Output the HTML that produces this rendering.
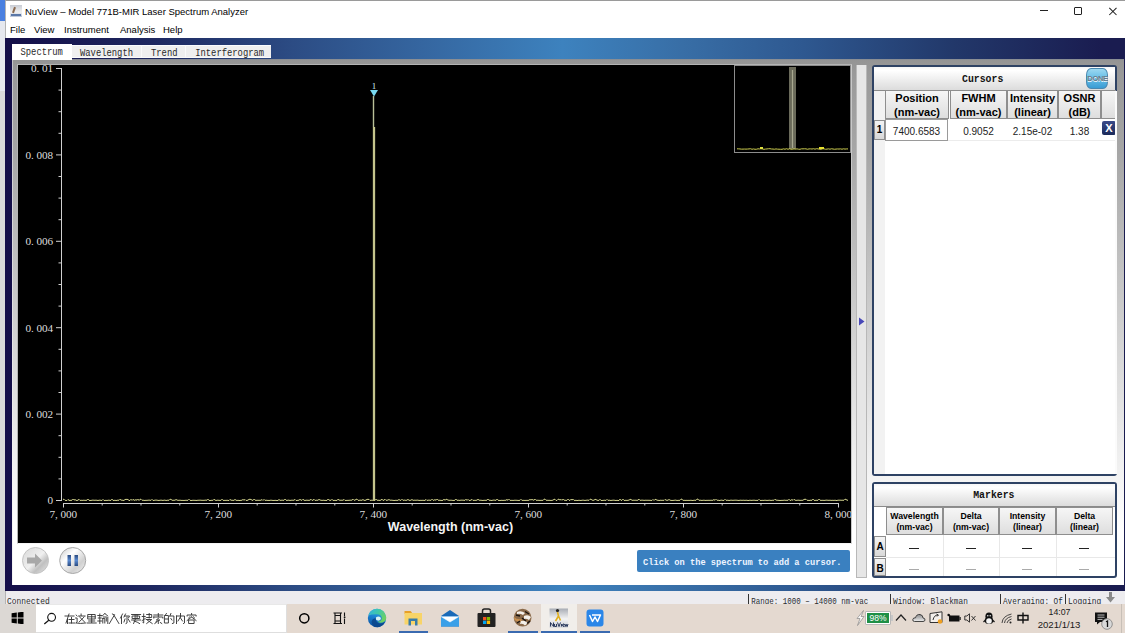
<!DOCTYPE html>
<html><head><meta charset="utf-8">
<style>
*{margin:0;padding:0;box-sizing:border-box}
html,body{width:1125px;height:633px;overflow:hidden;background:#d9d9d9;font-family:"Liberation Sans",sans-serif;position:relative}
.a{position:absolute;white-space:nowrap}
.mono{font-family:"Liberation Mono",monospace}
.sx{display:inline-block;transform-origin:0 0}
.tl{font-family:"Liberation Serif",serif;font-size:11.2px;fill:#dcdcdc}
.tm{font-family:"Liberation Mono",monospace;font-size:11.5px;fill:#e0e0e0}
.mi{font-size:9.5px;color:#000;top:24px;line-height:11px}
.hc{position:absolute;background:linear-gradient(#f6f6f6,#dedede);border:1px solid #8e8e8e;text-align:center;font-weight:bold;color:#000}
.rc{position:absolute;background:linear-gradient(#f4f4f4,#d8d8d8);border:1px solid #8e8e8e;text-align:center;font-weight:bold;color:#000}
.dc{position:absolute;text-align:center;color:#222;font-size:10px}
</style></head><body>
<!-- desktop strip -->
<div class="a" style="left:0;top:0;width:5px;height:21px;background:#4a80e0"></div>
<div class="a" style="left:0;top:21px;width:5px;height:70px;background:#e6e8ee"></div>
<div class="a" style="left:0;top:91px;width:5px;height:513px;background:#d9d9d9"></div>

<!-- window -->
<div class="a" style="left:5px;top:0;width:1120px;height:604px;background:#fff;border-left:1px solid #b4b4b4;border-top:1px solid #9a9a9a"></div>
<!-- app icon -->
<div class="a" style="left:10px;top:5px;width:12px;height:12px;background:linear-gradient(#c8ccd4,#f0f0f0 60%,#b8c4d8)"></div>
<div class="a" style="left:13px;top:7px;width:2px;height:6px;background:#8a6a50;transform:rotate(20deg)"></div>
<div class="a" style="left:11px;top:14px;width:10px;height:2px;background:#5a78a8"></div>
<!-- title -->
<div class="a" style="left:25px;top:5.5px;font-size:9.5px;line-height:11px;color:#000">NuView – Model 771B-MIR Laser Spectrum Analyzer</div>
<!-- window controls -->
<div class="a" style="left:1040px;top:10px;width:8px;height:1px;background:#222"></div>
<div class="a" style="left:1074px;top:7px;width:8px;height:8px;border:1px solid #222;border-radius:1px"></div>
<svg class="a" style="left:1108px;top:7px" width="10" height="9" viewBox="0 0 10 9"><path d="M1.3 0.8 L8.5 8 M8.5 0.8 L1.3 8" stroke="#222" stroke-width="1.05"/></svg>
<!-- menu -->
<div class="a mi" style="left:10px">File</div>
<div class="a mi" style="left:34px">View</div>
<div class="a mi" style="left:64px">Instrument</div>
<div class="a mi" style="left:120px">Analysis</div>
<div class="a mi" style="left:163px">Help</div>

<!-- app frame navy gradient -->
<div class="a" style="left:5px;top:38px;width:1120px;height:553px;background:linear-gradient(90deg,#140e48 0%,#1e2860 13.2%,#2c4c84 25.7%,#3566a0 37.3%,#3d82be 49.8%,#386ea6 60.5%,#2e5890 71.3%,#22386a 84.6%,#1a1c50 98%)"></div>
<!-- inner content -->
<div class="a" style="left:12px;top:59px;width:1112px;height:526px;background:linear-gradient(180deg,#949494 0%,#9a9a9a 3%,#a6a6a6 17.8%,#cacaca 45.9%,#eeeeee 74.4%,#ffffff 89.6%)"></div>
<div class="a" style="left:12px;top:59px;width:1112px;height:1px;background:#8a8e94"></div>
<div class="a" style="left:12px;top:59px;width:1px;height:526px;background:linear-gradient(#c4c4c8,#f4f4f4 80%)"></div>

<!-- tabs -->
<div class="a" style="left:12px;top:44px;width:60px;height:16px;background:#fff"></div>
<div class="a" style="left:72px;top:45px;width:199px;height:13px;background:#efefef;border-top:1px solid #fafcff;border-bottom:1px solid #fafafa"></div>
<div class="a" style="left:141px;top:45px;width:1px;height:13px;background:#fafafa"></div>
<div class="a" style="left:185px;top:45px;width:1px;height:13px;background:#fafafa"></div>

<!-- plot -->
<div class="a" style="left:17px;top:64px;width:835px;height:480px;border:1px solid #b4b4b4;border-right-color:#c8c8c8;border-bottom-color:#f4f4f4;background:#000"></div>
<svg class="a" style="left:0;top:0" width="1125" height="633" viewBox="0 0 1125 633">
<defs><clipPath id="pc"><rect x="18" y="65" width="833" height="478"/></clipPath></defs>
<g clip-path="url(#pc)">
<line x1="61.5" y1="68" x2="61.5" y2="501" stroke="#d0d0d0" stroke-width="1"/>
<line x1="56" y1="68.5" x2="62" y2="68.5" stroke="#d0d0d0" stroke-width="1"/>
<line x1="58.5" y1="90.1" x2="62" y2="90.1" stroke="#d0d0d0" stroke-width="1"/>
<line x1="58.5" y1="111.7" x2="62" y2="111.7" stroke="#d0d0d0" stroke-width="1"/>
<line x1="58.5" y1="133.3" x2="62" y2="133.3" stroke="#d0d0d0" stroke-width="1"/>
<text x="31.00 36.50 42.00 47.50" y="72.4" class="tl">0.01</text>
<line x1="56" y1="154.9" x2="62" y2="154.9" stroke="#d0d0d0" stroke-width="1"/>
<line x1="58.5" y1="176.5" x2="62" y2="176.5" stroke="#d0d0d0" stroke-width="1"/>
<line x1="58.5" y1="198.1" x2="62" y2="198.1" stroke="#d0d0d0" stroke-width="1"/>
<line x1="58.5" y1="219.7" x2="62" y2="219.7" stroke="#d0d0d0" stroke-width="1"/>
<text x="25.50 31.00 36.50 42.00 47.50" y="158.8" class="tl">0.008</text>
<line x1="56" y1="241.3" x2="62" y2="241.3" stroke="#d0d0d0" stroke-width="1"/>
<line x1="58.5" y1="262.9" x2="62" y2="262.9" stroke="#d0d0d0" stroke-width="1"/>
<line x1="58.5" y1="284.5" x2="62" y2="284.5" stroke="#d0d0d0" stroke-width="1"/>
<line x1="58.5" y1="306.1" x2="62" y2="306.1" stroke="#d0d0d0" stroke-width="1"/>
<text x="25.50 31.00 36.50 42.00 47.50" y="245.2" class="tl">0.006</text>
<line x1="56" y1="327.7" x2="62" y2="327.7" stroke="#d0d0d0" stroke-width="1"/>
<line x1="58.5" y1="349.3" x2="62" y2="349.3" stroke="#d0d0d0" stroke-width="1"/>
<line x1="58.5" y1="370.9" x2="62" y2="370.9" stroke="#d0d0d0" stroke-width="1"/>
<line x1="58.5" y1="392.5" x2="62" y2="392.5" stroke="#d0d0d0" stroke-width="1"/>
<text x="25.50 31.00 36.50 42.00 47.50" y="331.6" class="tl">0.004</text>
<line x1="56" y1="414.1" x2="62" y2="414.1" stroke="#d0d0d0" stroke-width="1"/>
<line x1="58.5" y1="435.7" x2="62" y2="435.7" stroke="#d0d0d0" stroke-width="1"/>
<line x1="58.5" y1="457.3" x2="62" y2="457.3" stroke="#d0d0d0" stroke-width="1"/>
<line x1="58.5" y1="478.9" x2="62" y2="478.9" stroke="#d0d0d0" stroke-width="1"/>
<text x="25.50 31.00 36.50 42.00 47.50" y="418.0" class="tl">0.002</text>
<line x1="56" y1="500.5" x2="62" y2="500.5" stroke="#d0d0d0" stroke-width="1"/>
<text x="47.50" y="504.4" class="tl">0</text>
<line x1="63" y1="503.5" x2="839" y2="503.5" stroke="#d0d0d0" stroke-width="1"/>
<line x1="63.5" y1="503" x2="63.5" y2="507.5" stroke="#d0d0d0" stroke-width="1"/>
<line x1="102.2" y1="503" x2="102.2" y2="505.5" stroke="#d0d0d0" stroke-width="1"/>
<line x1="141.0" y1="503" x2="141.0" y2="505.5" stroke="#d0d0d0" stroke-width="1"/>
<line x1="179.8" y1="503" x2="179.8" y2="505.5" stroke="#d0d0d0" stroke-width="1"/>
<text x="49.60 55.10 60.60 66.10 71.60" y="518" class="tl">7,000</text>
<line x1="218.5" y1="503" x2="218.5" y2="507.5" stroke="#d0d0d0" stroke-width="1"/>
<line x1="257.2" y1="503" x2="257.2" y2="505.5" stroke="#d0d0d0" stroke-width="1"/>
<line x1="296.0" y1="503" x2="296.0" y2="505.5" stroke="#d0d0d0" stroke-width="1"/>
<line x1="334.8" y1="503" x2="334.8" y2="505.5" stroke="#d0d0d0" stroke-width="1"/>
<text x="204.60 210.10 215.60 221.10 226.60" y="518" class="tl">7,200</text>
<line x1="373.5" y1="503" x2="373.5" y2="507.5" stroke="#d0d0d0" stroke-width="1"/>
<line x1="412.2" y1="503" x2="412.2" y2="505.5" stroke="#d0d0d0" stroke-width="1"/>
<line x1="451.0" y1="503" x2="451.0" y2="505.5" stroke="#d0d0d0" stroke-width="1"/>
<line x1="489.8" y1="503" x2="489.8" y2="505.5" stroke="#d0d0d0" stroke-width="1"/>
<text x="359.60 365.10 370.60 376.10 381.60" y="518" class="tl">7,400</text>
<line x1="528.5" y1="503" x2="528.5" y2="507.5" stroke="#d0d0d0" stroke-width="1"/>
<line x1="567.2" y1="503" x2="567.2" y2="505.5" stroke="#d0d0d0" stroke-width="1"/>
<line x1="606.0" y1="503" x2="606.0" y2="505.5" stroke="#d0d0d0" stroke-width="1"/>
<line x1="644.8" y1="503" x2="644.8" y2="505.5" stroke="#d0d0d0" stroke-width="1"/>
<text x="514.60 520.10 525.60 531.10 536.60" y="518" class="tl">7,600</text>
<line x1="683.5" y1="503" x2="683.5" y2="507.5" stroke="#d0d0d0" stroke-width="1"/>
<line x1="722.2" y1="503" x2="722.2" y2="505.5" stroke="#d0d0d0" stroke-width="1"/>
<line x1="761.0" y1="503" x2="761.0" y2="505.5" stroke="#d0d0d0" stroke-width="1"/>
<line x1="799.8" y1="503" x2="799.8" y2="505.5" stroke="#d0d0d0" stroke-width="1"/>
<text x="669.60 675.10 680.60 686.10 691.60" y="518" class="tl">7,800</text>
<line x1="838.5" y1="503" x2="838.5" y2="507.5" stroke="#d0d0d0" stroke-width="1"/>
<text x="824.60 830.10 835.60 841.10 846.60" y="518" class="tl">8,000</text>
<polyline points="63.0,499.37 64.0,499.24 65.0,500.29 66.0,500.48 67.0,500.49 68.0,499.47 69.0,500.33 70.0,500.45 71.0,500.25 72.0,500.27 73.0,499.11 74.0,500.16 75.0,499.44 76.0,500.38 77.0,500.43 78.0,500.24 79.0,499.28 80.0,500.48 81.0,500.23 82.0,500.37 83.0,500.32 84.0,500.18 85.0,500.40 86.0,500.29 87.0,500.21 88.0,499.11 89.0,500.33 90.0,500.44 91.0,500.48 92.0,500.19 93.0,500.15 94.0,500.22 95.0,500.27 96.0,500.16 97.0,500.31 98.0,500.48 99.0,500.24 100.0,500.17 101.0,500.35 102.0,500.49 103.0,499.43 104.0,500.48 105.0,500.45 106.0,500.34 107.0,500.47 108.0,500.28 109.0,500.17 110.0,500.39 111.0,500.36 112.0,499.12 113.0,500.43 114.0,500.41 115.0,500.26 116.0,500.50 117.0,500.35 118.0,500.12 119.0,500.29 120.0,499.23 121.0,500.14 122.0,500.15 123.0,500.34 124.0,500.46 125.0,499.48 126.0,499.42 127.0,499.36 128.0,499.50 129.0,500.46 130.0,500.49 131.0,499.25 132.0,500.40 133.0,499.35 134.0,500.16 135.0,500.31 136.0,499.47 137.0,500.36 138.0,499.17 139.0,500.49 140.0,499.29 141.0,499.28 142.0,500.29 143.0,500.15 144.0,500.40 145.0,500.43 146.0,500.29 147.0,500.37 148.0,500.18 149.0,500.16 150.0,500.17 151.0,500.41 152.0,499.36 153.0,500.49 154.0,500.40 155.0,500.12 156.0,500.13 157.0,500.12 158.0,500.41 159.0,500.42 160.0,500.25 161.0,500.16 162.0,500.24 163.0,500.47 164.0,500.14 165.0,500.20 166.0,500.43 167.0,500.37 168.0,500.11 169.0,500.34 170.0,499.21 171.0,499.45 172.0,500.14 173.0,500.44 174.0,500.11 175.0,500.36 176.0,499.45 177.0,500.11 178.0,500.29 179.0,500.33 180.0,500.17 181.0,500.40 182.0,500.40 183.0,500.40 184.0,500.45 185.0,500.36 186.0,500.27 187.0,500.33 188.0,500.30 189.0,499.29 190.0,500.32 191.0,500.50 192.0,500.43 193.0,500.21 194.0,500.37 195.0,500.28 196.0,500.46 197.0,500.40 198.0,500.19 199.0,500.28 200.0,500.14 201.0,500.25 202.0,500.30 203.0,500.32 204.0,500.31 205.0,500.22 206.0,500.12 207.0,500.28 208.0,499.16 209.0,500.45 210.0,500.47 211.0,500.47 212.0,500.19 213.0,500.44 214.0,499.24 215.0,500.15 216.0,500.41 217.0,500.34 218.0,500.10 219.0,500.44 220.0,500.29 221.0,500.42 222.0,499.21 223.0,500.28 224.0,500.49 225.0,500.25 226.0,500.47 227.0,500.18 228.0,500.46 229.0,500.48 230.0,499.39 231.0,500.33 232.0,500.17 233.0,500.44 234.0,500.27 235.0,499.46 236.0,500.22 237.0,500.47 238.0,500.25 239.0,500.47 240.0,500.47 241.0,500.32 242.0,500.28 243.0,499.39 244.0,500.29 245.0,499.46 246.0,500.48 247.0,500.38 248.0,500.20 249.0,499.30 250.0,499.36 251.0,499.40 252.0,500.21 253.0,500.42 254.0,499.13 255.0,500.17 256.0,500.30 257.0,500.34 258.0,500.22 259.0,500.36 260.0,500.22 261.0,500.34 262.0,499.48 263.0,500.47 264.0,499.40 265.0,500.47 266.0,500.15 267.0,500.39 268.0,500.38 269.0,500.44 270.0,500.39 271.0,500.11 272.0,500.40 273.0,500.38 274.0,500.50 275.0,500.31 276.0,500.42 277.0,500.50 278.0,500.46 279.0,499.48 280.0,500.38 281.0,500.27 282.0,500.20 283.0,500.21 284.0,500.34 285.0,499.11 286.0,500.21 287.0,500.48 288.0,500.14 289.0,500.21 290.0,500.44 291.0,500.30 292.0,500.18 293.0,500.27 294.0,500.23 295.0,499.41 296.0,500.45 297.0,500.46 298.0,500.28 299.0,500.25 300.0,499.30 301.0,500.18 302.0,500.30 303.0,499.24 304.0,500.21 305.0,500.47 306.0,500.21 307.0,500.20 308.0,500.30 309.0,500.31 310.0,500.19 311.0,499.24 312.0,500.44 313.0,500.20 314.0,499.27 315.0,500.48 316.0,500.23 317.0,500.23 318.0,500.29 319.0,499.31 320.0,500.14 321.0,500.11 322.0,500.49 323.0,500.17 324.0,500.32 325.0,500.42 326.0,500.42 327.0,500.44 328.0,499.12 329.0,500.17 330.0,500.15 331.0,500.41 332.0,499.31 333.0,500.50 334.0,500.32 335.0,500.44 336.0,500.37 337.0,500.50 338.0,499.16 339.0,500.13 340.0,500.14 341.0,500.35 342.0,500.10 343.0,500.36 344.0,499.39 345.0,500.46 346.0,500.39 347.0,500.40 348.0,500.30 349.0,500.35 350.0,500.15 351.0,500.25 352.0,500.12 353.0,499.21 354.0,500.21 355.0,500.20 356.0,499.39 357.0,499.13 358.0,500.31 359.0,500.38 360.0,500.11 361.0,500.24 362.0,500.28 363.0,499.43 364.0,500.42 365.0,500.30 366.0,500.14 367.0,499.32 368.0,499.42 369.0,499.36 370.0,500.40 371.0,500.27 372.0,500.20 373.0,500.33 374.0,500.35 375.0,500.48 376.0,499.11 377.0,500.30 378.0,500.15 379.0,500.39 380.0,500.34 381.0,500.12 382.0,499.15 383.0,500.49 384.0,500.14 385.0,499.27 386.0,500.34 387.0,500.17 388.0,500.11 389.0,499.46 390.0,500.29 391.0,500.12 392.0,500.24 393.0,500.32 394.0,500.48 395.0,500.41 396.0,500.24 397.0,500.45 398.0,500.25 399.0,499.46 400.0,500.29 401.0,500.34 402.0,499.26 403.0,500.38 404.0,500.12 405.0,500.15 406.0,500.41 407.0,500.12 408.0,499.38 409.0,500.30 410.0,500.33 411.0,500.23 412.0,499.41 413.0,500.36 414.0,500.23 415.0,500.18 416.0,500.30 417.0,500.11 418.0,500.17 419.0,500.41 420.0,500.38 421.0,500.30 422.0,500.41 423.0,500.23 424.0,500.44 425.0,500.41 426.0,499.44 427.0,500.48 428.0,500.14 429.0,500.21 430.0,500.13 431.0,500.43 432.0,499.20 433.0,500.23 434.0,500.35 435.0,499.43 436.0,500.39 437.0,499.12 438.0,500.11 439.0,500.36 440.0,500.17 441.0,500.48 442.0,500.35 443.0,500.42 444.0,499.14 445.0,500.34 446.0,499.19 447.0,499.49 448.0,500.13 449.0,500.20 450.0,500.36 451.0,500.12 452.0,500.40 453.0,500.37 454.0,500.50 455.0,500.13 456.0,499.12 457.0,500.41 458.0,500.12 459.0,500.35 460.0,500.33 461.0,500.13 462.0,500.18 463.0,500.17 464.0,500.26 465.0,500.37 466.0,499.19 467.0,500.42 468.0,499.40 469.0,500.49 470.0,500.37 471.0,500.15 472.0,499.39 473.0,500.46 474.0,500.22 475.0,500.41 476.0,500.25 477.0,500.20 478.0,499.23 479.0,500.16 480.0,500.27 481.0,500.20 482.0,500.40 483.0,500.44 484.0,500.27 485.0,500.34 486.0,500.30 487.0,500.18 488.0,499.10 489.0,500.31 490.0,500.16 491.0,500.48 492.0,500.45 493.0,500.11 494.0,500.13 495.0,500.15 496.0,500.40 497.0,499.12 498.0,500.26 499.0,500.41 500.0,500.44 501.0,500.40 502.0,500.24 503.0,500.50 504.0,500.23 505.0,500.38 506.0,500.18 507.0,499.47 508.0,500.34 509.0,499.24 510.0,500.43 511.0,500.34 512.0,500.38 513.0,500.38 514.0,500.36 515.0,500.15 516.0,500.35 517.0,500.21 518.0,500.50 519.0,500.33 520.0,500.34 521.0,499.32 522.0,500.49 523.0,500.24 524.0,500.46 525.0,500.35 526.0,500.44 527.0,500.29 528.0,500.46 529.0,500.18 530.0,499.42 531.0,500.12 532.0,499.31 533.0,500.13 534.0,500.14 535.0,499.17 536.0,500.19 537.0,500.34 538.0,500.17 539.0,500.41 540.0,500.29 541.0,500.45 542.0,500.21 543.0,500.48 544.0,499.20 545.0,499.16 546.0,500.26 547.0,500.25 548.0,500.33 549.0,500.33 550.0,500.32 551.0,500.49 552.0,500.30 553.0,500.19 554.0,499.32 555.0,499.31 556.0,500.45 557.0,500.46 558.0,499.30 559.0,499.25 560.0,500.21 561.0,499.30 562.0,500.30 563.0,499.12 564.0,500.16 565.0,500.21 566.0,500.42 567.0,500.30 568.0,499.13 569.0,500.18 570.0,500.47 571.0,499.20 572.0,500.14 573.0,499.17 574.0,500.30 575.0,500.42 576.0,500.30 577.0,500.49 578.0,500.44 579.0,500.23 580.0,500.43 581.0,500.45 582.0,500.25 583.0,500.15 584.0,500.27 585.0,500.46 586.0,500.25 587.0,500.18 588.0,500.10 589.0,500.36 590.0,499.32 591.0,499.20 592.0,500.17 593.0,500.24 594.0,500.27 595.0,499.37 596.0,499.49 597.0,500.25 598.0,500.29 599.0,500.45 600.0,499.24 601.0,500.50 602.0,500.46 603.0,500.41 604.0,500.26 605.0,500.25 606.0,500.45 607.0,499.40 608.0,500.46 609.0,500.15 610.0,500.34 611.0,500.50 612.0,500.28 613.0,500.24 614.0,500.13 615.0,500.40 616.0,500.48 617.0,500.34 618.0,500.48 619.0,500.50 620.0,499.12 621.0,500.42 622.0,500.30 623.0,499.17 624.0,500.38 625.0,500.48 626.0,500.19 627.0,500.50 628.0,500.20 629.0,500.20 630.0,499.41 631.0,499.41 632.0,500.37 633.0,500.22 634.0,500.22 635.0,500.28 636.0,500.18 637.0,500.39 638.0,500.11 639.0,499.15 640.0,500.40 641.0,500.20 642.0,500.20 643.0,500.15 644.0,500.40 645.0,500.25 646.0,500.23 647.0,500.31 648.0,500.22 649.0,500.33 650.0,500.27 651.0,500.42 652.0,500.47 653.0,499.44 654.0,500.46 655.0,499.36 656.0,499.49 657.0,500.22 658.0,500.22 659.0,500.47 660.0,500.35 661.0,500.17 662.0,500.47 663.0,500.13 664.0,500.46 665.0,499.46 666.0,500.16 667.0,500.25 668.0,500.25 669.0,499.46 670.0,500.20 671.0,500.37 672.0,500.49 673.0,500.39 674.0,500.35 675.0,500.11 676.0,500.16 677.0,500.49 678.0,500.33 679.0,500.36 680.0,500.28 681.0,499.16 682.0,499.17 683.0,500.50 684.0,500.20 685.0,500.50 686.0,500.30 687.0,500.43 688.0,500.36 689.0,500.40 690.0,500.39 691.0,500.22 692.0,500.46 693.0,500.47 694.0,500.22 695.0,500.25 696.0,500.34 697.0,499.14 698.0,499.14 699.0,500.42 700.0,500.14 701.0,500.35 702.0,500.41 703.0,500.29 704.0,500.20 705.0,500.36 706.0,500.44 707.0,500.24 708.0,500.43 709.0,500.19 710.0,500.45 711.0,500.15 712.0,500.42 713.0,500.22 714.0,499.44 715.0,500.40 716.0,499.29 717.0,500.37 718.0,500.11 719.0,500.46 720.0,500.46 721.0,500.11 722.0,500.21 723.0,500.42 724.0,500.46 725.0,499.34 726.0,500.34 727.0,500.22 728.0,500.25 729.0,500.44 730.0,500.34 731.0,500.14 732.0,500.27 733.0,500.33 734.0,500.21 735.0,500.19 736.0,500.16 737.0,500.24 738.0,500.37 739.0,500.46 740.0,500.19 741.0,500.25 742.0,500.33 743.0,500.25 744.0,500.23 745.0,500.43 746.0,500.19 747.0,500.30 748.0,500.48 749.0,500.44 750.0,500.12 751.0,500.46 752.0,500.28 753.0,500.30 754.0,500.17 755.0,500.34 756.0,500.42 757.0,500.34 758.0,500.45 759.0,499.36 760.0,500.39 761.0,500.49 762.0,500.33 763.0,500.36 764.0,500.41 765.0,500.12 766.0,500.41 767.0,500.34 768.0,500.45 769.0,500.18 770.0,500.31 771.0,500.41 772.0,500.36 773.0,500.17 774.0,500.31 775.0,499.28 776.0,500.17 777.0,500.16 778.0,500.35 779.0,500.33 780.0,500.50 781.0,500.39 782.0,500.38 783.0,500.33 784.0,500.24 785.0,500.13 786.0,500.48 787.0,500.14 788.0,500.44 789.0,499.25 790.0,500.50 791.0,500.24 792.0,499.46 793.0,500.41 794.0,499.36 795.0,500.14 796.0,500.43 797.0,500.26 798.0,500.23 799.0,500.18 800.0,500.42 801.0,500.29 802.0,500.32 803.0,500.28 804.0,499.41 805.0,499.30 806.0,499.31 807.0,500.30 808.0,500.28 809.0,500.50 810.0,500.31 811.0,500.23 812.0,500.35 813.0,499.12 814.0,500.25 815.0,500.49 816.0,500.23 817.0,500.37 818.0,500.30 819.0,499.14 820.0,500.21 821.0,500.36 822.0,500.35 823.0,500.29 824.0,500.42 825.0,500.33 826.0,500.17 827.0,500.17 828.0,500.30 829.0,500.30 830.0,500.24 831.0,500.37 832.0,500.38 833.0,500.25 834.0,500.48 835.0,500.15 836.0,500.48 837.0,500.50 838.0,500.13 839.0,500.24 840.0,500.14 841.0,500.25 842.0,500.22 843.0,500.23 844.0,500.23 845.0,499.19 846.0,499.43 847.0,500.19 848.0,500.24" fill="none" stroke="#d8d890" stroke-width="1"/>
<line x1="373.5" y1="96" x2="373.5" y2="127" stroke="#b8bf98" stroke-width="1.4"/>
<line x1="374" y1="127" x2="374" y2="500" stroke="#c4c48c" stroke-width="2.3"/>
<polygon points="370,90 378,90 374,96.5" fill="#78d8f0"/>
<text x="374" y="89" text-anchor="middle" class="tl" style="font-size:9px;fill:#c8e8f0">1</text>
<text x="450.5" y="531" text-anchor="middle" style="font:bold 12.5px 'Liberation Sans',sans-serif;fill:#f4f4f4">Wavelength (nm-vac)</text>
<rect x="734.5" y="65.5" width="116" height="87" fill="#000" stroke="#8c8c8c" stroke-width="1"/>
<rect x="789" y="67" width="7" height="82" fill="#6a6a5a"/>
<line x1="792.5" y1="70" x2="792.5" y2="148" stroke="#a8a890" stroke-width="1.2"/>
<polyline points="737.0,148.81 738.5,148.83 740.0,148.96 741.5,149.15 743.0,149.12 744.5,149.05 746.0,149.11 747.5,149.04 749.0,148.91 750.5,148.74 752.0,149.27 753.5,148.96 755.0,149.28 756.5,149.23 758.0,148.81 759.5,148.95 761.0,148.75 762.5,149.03 764.0,149.29 765.5,149.07 767.0,148.94 768.5,148.74 770.0,148.71 771.5,149.01 773.0,149.05 774.5,149.24 776.0,148.91 777.5,149.17 779.0,149.21 780.5,149.29 782.0,149.30 783.5,148.89 785.0,149.23 786.5,148.72 788.0,149.25 789.5,148.78 791.0,149.22 792.5,149.29 794.0,148.87 795.5,149.15 797.0,148.86 798.5,149.19 800.0,149.27 801.5,148.84 803.0,148.87 804.5,148.79 806.0,148.86 807.5,149.25 809.0,148.92 810.5,148.87 812.0,149.02 813.5,148.74 815.0,149.15 816.5,148.72 818.0,148.87 819.5,149.29 821.0,149.29 822.5,148.91 824.0,148.81 825.5,149.25 827.0,149.11 828.5,148.86 830.0,149.20 831.5,148.78 833.0,149.01 834.5,149.26 836.0,149.08 837.5,148.96 839.0,149.04 840.5,148.89 842.0,149.21 843.5,148.82 845.0,149.08 846.5,148.91 848.0,148.92" fill="none" stroke="#e4e458" stroke-width="0.9"/>
<rect x="760" y="147" width="3" height="2" fill="#e0e040"/>
<rect x="819" y="147" width="5" height="2" fill="#e8e030"/>

</g>
</svg>

<!-- buttons under plot -->
<svg class="a" style="left:20px;top:545px" width="70" height="32" viewBox="0 0 70 32">
<defs>
<linearGradient id="g1" x1="0" y1="0" x2="1" y2="1"><stop offset="0" stop-color="#d8d8d8"/><stop offset="0.5" stop-color="#f0f0f0"/><stop offset="0.7" stop-color="#c0c0c0"/><stop offset="1" stop-color="#e8e8e8"/></linearGradient>
<linearGradient id="g2" x1="0" y1="0" x2="1" y2="1"><stop offset="0" stop-color="#c8c8c8"/><stop offset="0.35" stop-color="#ffffff"/><stop offset="0.7" stop-color="#d0d0d0"/><stop offset="1" stop-color="#f4f4f4"/></linearGradient>
<linearGradient id="g3" x1="0" y1="0" x2="0" y2="1"><stop offset="0" stop-color="#2a4a80"/><stop offset="0.5" stop-color="#5a8ad0"/><stop offset="1" stop-color="#2a4a80"/></linearGradient>
</defs>
<circle cx="15.5" cy="15.5" r="13" fill="url(#g1)" stroke="#c4c4c4" stroke-width="1"/>
<path d="M7 12.5 H15 V8.5 L22 15.5 L15 22.5 V18.5 H7 Z" fill="#a8a8a8"/>
<circle cx="52.7" cy="15.5" r="13" fill="url(#g2)" stroke="#a8a8a8" stroke-width="1"/>
<rect x="47.5" y="10" width="3.5" height="11" fill="url(#g3)"/>
<rect x="54.5" y="10" width="3.5" height="11" fill="url(#g3)"/>
</svg>

<!-- message -->
<div class="a" style="left:637px;top:550px;width:213px;height:22px;background:#3a80c0;border-radius:2px"></div>

<!-- scroll strip -->
<div class="a" style="left:856px;top:65px;width:11px;height:513px;background:#e6e6e6;border:1px solid #b8b8b8;border-top:none"></div>
<svg class="a" style="left:858px;top:317px" width="8" height="9" viewBox="0 0 8 9"><path d="M1 0.5 L6.5 4.5 L1 8.5 Z" fill="#4848b8"/></svg>

<!-- right panel: cursors -->
<div class="a" style="left:872px;top:65px;width:245px;height:411px;background:#fff;border:2px solid #2e4264;border-radius:3px"></div>
<div class="a" style="left:874px;top:67px;width:241px;height:24px;background:linear-gradient(#f6f6f6,#ffffff 15%,#ececec 60%,#dcdcdc);border-bottom:1px solid #8a8a8a"></div>
<div class="a" style="left:1086px;top:68px;width:22px;height:21px;border-radius:5px/7px;background:linear-gradient(#9cd8f0,#6ac0e8 45%,#3a9cd4);border:1px solid #4a88b0"></div>
<div class="a" style="left:1086px;top:75px;width:23px;text-align:center;font-size:7.5px;line-height:8px;font-weight:bold;color:#6a7a88;letter-spacing:-0.3px;text-shadow:0 1px 0 #e8f4fa">DONE</div>
<div class="a" style="left:874px;top:91px;width:241px;height:383px;background:linear-gradient(90deg,#f2f2f2 0,#f2f2f2 11px,#fff 11px)"></div>
<div class="hc" style="left:885px;top:90px;width:64px;height:29px;font-size:11px;line-height:14px;padding-top:0">Position<br>(nm-vac)</div>
<div class="hc" style="left:950px;top:90px;width:57px;height:29px;font-size:11px;line-height:14px;padding-top:0">FWHM<br>(nm-vac)</div>
<div class="hc" style="left:1007px;top:90px;width:51px;height:29px;font-size:11px;line-height:14px;padding-top:0">Intensity<br>(linear)</div>
<div class="hc" style="left:1058px;top:90px;width:43px;height:29px;font-size:11px;line-height:14px;padding-top:0">OSNR<br>(dB)</div>
<div class="hc" style="left:1101px;top:90px;width:15px;height:29px"></div>
<div class="rc" style="left:874px;top:120px;width:11px;height:20px;font-size:10px;line-height:18px">1</div>
<div class="a" style="left:885px;top:119px;width:63px;height:22px;border:1px solid #9a9a9a;background:#fff"></div>
<div class="a" style="left:948px;top:140px;width:167px;height:1px;background:#ececec"></div>
<div class="dc" style="left:885px;top:126px;width:63px;line-height:12px">7400.6583</div>
<div class="dc" style="left:950px;top:126px;width:57px;line-height:12px">0.9052</div>
<div class="dc" style="left:1007px;top:126px;width:51px;line-height:12px">2.15e-02</div>
<div class="dc" style="left:1058px;top:126px;width:43px;line-height:12px">1.38</div>
<div class="a" style="left:1102px;top:121px;width:14px;height:14px;border-radius:2px;background:linear-gradient(#3a4a8a,#1a2a5a)"></div>
<div class="a" style="left:1102px;top:121px;width:14px;height:14px;font-size:11px;line-height:14px;font-weight:bold;color:#fff;text-align:center">X</div>

<div class="a" style="left:1115px;top:91px;width:2px;height:383px;background:#fbfbfb"></div>
<!-- right panel: markers -->
<div class="a" style="left:872px;top:482px;width:245px;height:96px;background:#fff;border:2px solid #2e4264;border-radius:3px"></div>
<div class="a" style="left:874px;top:484px;width:241px;height:23px;background:linear-gradient(#f6f6f6,#ffffff 15%,#ececec 60%,#dcdcdc);border-bottom:1px solid #8a8a8a"></div>
<div class="hc" style="left:886px;top:507px;width:57px;height:28px;font-size:8.7px;line-height:11px;padding-top:3px">Wavelength<br>(nm-vac)</div>
<div class="hc" style="left:943px;top:507px;width:56px;height:28px;font-size:8.7px;line-height:11px;padding-top:3px">Delta<br>(nm-vac)</div>
<div class="hc" style="left:999px;top:507px;width:57px;height:28px;font-size:8.7px;line-height:11px;padding-top:3px">Intensity<br>(linear)</div>
<div class="hc" style="left:1056px;top:507px;width:57px;height:28px;font-size:8.7px;line-height:11px;padding-top:3px">Delta<br>(linear)</div>
<div class="rc" style="left:874px;top:536px;width:12px;height:21px;font-size:10px;line-height:20px">A</div>
<div class="rc" style="left:874px;top:558px;width:12px;height:18px;font-size:10px;line-height:20px">B</div>
<div class="a" style="left:886px;top:557px;width:229px;height:1px;background:#e8e8e8"></div>
<div class="a" style="left:943px;top:535px;width:1px;height:41px;background:#e8e8e8"></div>
<div class="a" style="left:999px;top:535px;width:1px;height:41px;background:#e8e8e8"></div>
<div class="a" style="left:1056px;top:535px;width:1px;height:41px;background:#e8e8e8"></div>
<div class="a" style="left:909px;top:548px;width:10px;height:1px;background:#222"></div>
<div class="a" style="left:966px;top:548px;width:10px;height:1px;background:#222"></div>
<div class="a" style="left:1022px;top:548px;width:10px;height:1px;background:#222"></div>
<div class="a" style="left:1079px;top:548px;width:10px;height:1px;background:#222"></div>
<div class="a" style="left:909px;top:569px;width:10px;height:1px;background:#aaa"></div>
<div class="a" style="left:966px;top:569px;width:10px;height:1px;background:#aaa"></div>
<div class="a" style="left:1022px;top:569px;width:10px;height:1px;background:#aaa"></div>
<div class="a" style="left:1079px;top:569px;width:10px;height:1px;background:#aaa"></div>

<!-- status bar -->
<div class="a" style="left:6px;top:591px;width:1119px;height:13px;background:#edecef"></div>
<div class="a" style="left:748px;top:594px;width:1px;height:10px;background:#333"></div>
<div class="a" style="left:890px;top:594px;width:1px;height:10px;background:#333"></div>
<div class="a" style="left:1000px;top:594px;width:1px;height:10px;background:#333"></div>
<div class="a" style="left:1065px;top:594px;width:1px;height:10px;background:#333"></div>
<svg class="a" style="left:1106px;top:592px" width="9" height="11" viewBox="0 0 9 11"><path d="M3 0 H6 V5 H9 L4.5 10.5 L0 5 H3 Z" fill="#8a8a8a"/></svg>

<svg class="a" style="left:0;top:0" width="1125" height="633" viewBox="0 0 1125 633"><text x="20.50" y="54.8" textLength="42.40" lengthAdjust="spacingAndGlyphs" style="font-family:'Liberation Mono',monospace;font-size:10.2px;font-weight:normal;fill:#2a2a2a;white-space:pre">Spectrum</text><text x="80.00" y="55.5" textLength="53.00" lengthAdjust="spacingAndGlyphs" style="font-family:'Liberation Mono',monospace;font-size:10.2px;font-weight:normal;fill:#2a2a2a;white-space:pre">Wavelength</text><text x="151.00" y="55.5" textLength="26.50" lengthAdjust="spacingAndGlyphs" style="font-family:'Liberation Mono',monospace;font-size:10.2px;font-weight:normal;fill:#2a2a2a;white-space:pre">Trend</text><text x="195.20" y="55.5" textLength="68.90" lengthAdjust="spacingAndGlyphs" style="font-family:'Liberation Mono',monospace;font-size:10.2px;font-weight:normal;fill:#2a2a2a;white-space:pre">Interferogram</text><text x="7.00" y="604.2" textLength="42.75" lengthAdjust="spacingAndGlyphs" style="font-family:'Liberation Mono',monospace;font-size:9.6px;font-weight:normal;fill:#2a2a2a;white-space:pre">Connected</text><text x="751.20" y="604.2" textLength="117.00" lengthAdjust="spacingAndGlyphs" style="font-family:'Liberation Mono',monospace;font-size:9.6px;font-weight:normal;fill:#2a2a2a;white-space:pre">Range: 1000 – 14000 nm-vac</text><text x="893.00" y="604.2" textLength="74.88" lengthAdjust="spacingAndGlyphs" style="font-family:'Liberation Mono',monospace;font-size:9.6px;font-weight:normal;fill:#2a2a2a;white-space:pre">Window: Blackman</text><text x="1003.00" y="604.2" textLength="59.80" lengthAdjust="spacingAndGlyphs" style="font-family:'Liberation Mono',monospace;font-size:9.6px;font-weight:normal;fill:#2a2a2a;white-space:pre">Averaging: Of</text><text x="1068.00" y="604.2" textLength="33.25" lengthAdjust="spacingAndGlyphs" style="font-family:'Liberation Mono',monospace;font-size:9.6px;font-weight:normal;fill:#2a2a2a;white-space:pre">Logging</text><text x="962.00" y="82.2" textLength="41.30" lengthAdjust="spacingAndGlyphs" style="font-family:'Liberation Mono',monospace;font-size:10.6px;font-weight:bold;fill:#111;white-space:pre">Cursors</text><text x="973.20" y="498.2" textLength="41.30" lengthAdjust="spacingAndGlyphs" style="font-family:'Liberation Mono',monospace;font-size:10.6px;font-weight:bold;fill:#111;white-space:pre">Markers</text><text x="643.00" y="564.6" textLength="198.36" lengthAdjust="spacingAndGlyphs" style="font-family:'Liberation Mono',monospace;font-size:9.6px;font-weight:bold;fill:#eef4ff;white-space:pre">Click on the spectrum to add a cursor.</text></svg>

<!-- taskbar -->
<div class="a" style="left:0;top:604px;width:1125px;height:29px;background:#e4d9d0"></div>
<div class="a" style="left:0;top:604px;width:36px;height:29px;background:#dcd8d4"></div>
<!-- start logo -->
<svg class="a" style="left:11px;top:612px" width="13" height="12" viewBox="0 0 13 12">
<path d="M0.6 1.2 L5.8 0.5 V5.5 H0.6 Z M6.8 0.4 L12.5 -0.3 V5.5 H6.8 Z M0.6 6.5 H5.8 V11.5 L0.6 10.8 Z M6.8 6.5 H12.5 V12.3 L6.8 11.6 Z" fill="#000"/>
</svg>
<!-- search box -->
<div class="a" style="left:36px;top:604px;width:251px;height:29px;background:#fff;border:1px solid #dedede;border-left:none;border-top-color:#e8e8e8"></div>
<svg class="a" style="left:43px;top:612px" width="14" height="13" viewBox="0 0 14 13">
<circle cx="8.6" cy="5.3" r="3.9" fill="none" stroke="#111" stroke-width="1.1"/>
<path d="M5.8 8.2 L1.3 12" stroke="#111" stroke-width="1.2"/>
</svg>
<svg class="a" style="left:64px;top:613px" width="136" height="12" viewBox="0 0 136 12">
<g fill="none" stroke="#3a3a3a" stroke-width="0.95" stroke-linecap="square">
<g transform="translate(0,0)"><path d="M1 3 H10 M5 1 L2 10 M3.5 6 V10.5 M5 6.5 H10 M7.5 4.5 V10 M5 10 H10.5"/></g>
<g transform="translate(11.1,0)"><path d="M1 2 L2 3 M0.5 5 H2 V9 L1 10 M1 10 Q5 11 10.5 10 M6 1 V2.5 M3.5 3 H10 M4.5 4 L9.5 9 M9 4 L4 9"/></g>
<g transform="translate(22.2,0)"><path d="M2 1.5 H9 V6 H2 Z M2 3.8 H9 M5.5 1.5 V9.5 M2.5 8 H8.5 M1 10 H10"/></g>
<g transform="translate(33.3,0)"><path d="M0.5 2.5 H4.5 M2.5 1 V10.5 M1 5 L4 5 M0.5 8 H4.5 M7.5 0.5 L5 3 M7.5 0.5 L10.5 3 M6 4 H9 M5.5 5.5 V10 M5.5 5.5 H7.5 V10 M9 5 V8 M10.5 4.5 V10.5"/></g>
<g transform="translate(44.4,0)"><path d="M4 1 L6 2 M6 2 L1 10.5 M6 3 L10.5 10.5"/></g>
<g transform="translate(55.5,0)"><path d="M3 1 L1 5 M2 3.5 V10.5 M6 1 L4.5 4 M5 3 H10 L9 5 M7.5 4 V10 L6.5 10.5 M5.5 6 L4.5 9 M9 6.5 L10.5 9"/></g>
<g transform="translate(66.6,0)"><path d="M1 1.5 H10 M2 3 H9 V5.5 H2 Z M4.5 1.5 V5.5 M6.5 1.5 V5.5 M1 7 H10 M5 5.5 L3 10.5 M3.5 8 Q7 9 9 10.5"/></g>
<g transform="translate(77.7,0)"><path d="M0.5 3.5 H3.5 M2 1 V10 L1.2 9.5 M0.5 7.5 L3.5 5.5 M5 1.5 H10 V4.5 H5 M7.5 0.5 V5 M4.5 6.5 H10 L5 10.5 M5.5 7 L10.5 10.5"/></g>
<g transform="translate(88.8,0)"><path d="M1 2 H10 M5.5 0.5 V3.5 M1 4 H10 V5 M1 4 V5 M6 5 L3.5 7 H7 L3 9 M5.5 8 V10.5 M3.5 9.5 L2 10.5 M7.5 9.5 L9 10.5"/></g>
<g transform="translate(99.9,0)"><path d="M2.5 0.5 L1.5 2 M1 2.5 H4.5 V10 H1 Z M1 6 H4.5 M7 0.5 L6 3 M6 3 H10 V10 L8.5 10.5 M7 5.5 L8 7"/></g>
<g transform="translate(111,0)"><path d="M5.5 0.5 V4 M1.5 3 V10.5 M1.5 3 H9.5 V10 L8.5 10.5 M5.5 4 L3 8 M5.5 5 L7.5 8"/></g>
<g transform="translate(122.1,0)"><path d="M5.5 0.5 V1.5 M1 3 V2 H10 V3 M4 3.5 L2.5 5 M7 3.5 L8.5 5 M5.5 4 L1 7.5 M5.5 4 L10 7.5 M3 7 H8 V10.5 H3 Z"/></g>
</g>
</svg>
<!-- cortana -->
<svg class="a" style="left:298px;top:612px" width="13" height="13" viewBox="0 0 13 13"><circle cx="6.3" cy="6.3" r="4.6" fill="none" stroke="#000" stroke-width="1.5"/></svg>
<!-- task view -->
<svg class="a" style="left:333px;top:612px" width="14" height="13" viewBox="0 0 14 13">
<path d="M0.5 1 H9 M0.5 11.5 H9 M2 1 V11.5 M7.5 1 V11.5 M2 3.5 H7.5 M2 9 H7.5 M11.5 0.5 V4 M11.5 6.5 V12" stroke="#111" stroke-width="1.1" fill="none"/>
<circle cx="11.6" cy="5.2" r="0.9" fill="#111"/>
</svg>
<!-- edge -->
<svg class="a" style="left:367px;top:608px" width="20" height="20" viewBox="0 0 20 20">
<defs>
<linearGradient id="eg1" x1="0" y1="1" x2="0.3" y2="0"><stop offset="0" stop-color="#0a4a9a"/><stop offset="0.6" stop-color="#1a80d0"/><stop offset="1" stop-color="#30a8e0"/></linearGradient>
<linearGradient id="eg2" x1="0" y1="0" x2="1" y2="0.6"><stop offset="0" stop-color="#30b0e8"/><stop offset="0.5" stop-color="#40c8a8"/><stop offset="1" stop-color="#70d060"/></linearGradient>
</defs>
<circle cx="10" cy="10" r="9.2" fill="url(#eg1)"/>
<path d="M1.5 7.5 Q3.5 1 10 0.8 Q17.5 1 19.2 9 Q19.3 13.5 15.5 14.5 Q12.5 15 10.5 13.8 Q15 13 14.8 10 Q14.5 6.5 10 6.2 Q4.5 6 1.5 7.5 Z" fill="url(#eg2)"/>
<ellipse cx="11.3" cy="10.6" rx="2.6" ry="2.1" fill="#d8f2f4"/>
<path d="M8.8 10 Q8.5 14 12 15.2 Q15.5 16 18 13.5 Q16.5 18.5 10.5 19.2 Q5 19 4.5 14 Q5 10.5 8.8 10 Z" fill="#0a4488" opacity="0.85"/>
</svg>
<!-- explorer -->
<svg class="a" style="left:404px;top:610px" width="19" height="16" viewBox="0 0 19 16">
<path d="M0.5 1 H6.5 L8 2.5 V4 H0.5 Z" fill="#e8a028"/>
<path d="M0.5 3 H18 V14.5 H0.5 Z" fill="#f8d468"/>
<path d="M4.5 8.5 H13.5 V15.5 H11 V11 H7 V15.5 H4.5 Z" fill="#3a7ca8"/>
</svg>
<div class="a" style="left:399px;top:631px;width:29px;height:2px;background:#3a6ab0"></div>
<!-- mail -->
<svg class="a" style="left:440px;top:609px" width="20" height="19" viewBox="0 0 20 19">
<path d="M1 7 L10 1 L19 7 V17.5 H1 Z" fill="#1a6ab8"/>
<path d="M1 7.5 H19 V17.5 H1 Z" fill="#3aa0e8"/>
<path d="M1 7.5 L10 13 L19 7.5" fill="#fff" stroke="#fff" stroke-width="0.6"/>
</svg>
<!-- store -->
<svg class="a" style="left:477px;top:608px" width="19" height="20" viewBox="0 0 19 20">
<path d="M5.5 5 V3 Q5.5 1 7.5 1 H11.5 Q13.5 1 13.5 3 V5" fill="none" stroke="#222" stroke-width="1.5"/>
<rect x="0.5" y="5" width="18" height="14" rx="1" fill="#222"/>
<rect x="6" y="9" width="3.3" height="3.3" fill="#f25022"/><rect x="9.8" y="9" width="3.3" height="3.3" fill="#7fba00"/>
<rect x="6" y="12.7" width="3.3" height="3.3" fill="#00a4ef"/><rect x="9.8" y="12.7" width="3.3" height="3.3" fill="#ffb900"/>
</svg>
<!-- avatar -->
<svg class="a" style="left:513px;top:608px" width="20" height="20" viewBox="0 0 20 20">
<circle cx="9.6" cy="9.7" r="8.9" fill="#8a6a4a"/>
<path d="M1 9 Q4 12 9 11 L8 14 Q4 14 1.5 12 Z" fill="#c89050"/>
<path d="M4 4 Q8 2 12 5 L10 7 Q7 5 4 6 Z M11 8 Q15 6 18 9 L16 12 Q13 10 11 11 Z M8 13 Q12 12 15 15 L12 17.5 Q10 15 7 16 Z" fill="#f4f0ea"/>
<path d="M3 7 L7 8 M12 3.5 L16 6 M9 10 L13 13 M4 15 L7 13 M14 15.5 L17 13" stroke="#1a1410" stroke-width="1.4"/>
</svg>
<div class="a" style="left:508px;top:631px;width:30px;height:2px;background:#3a6ab0"></div>
<!-- nuview active -->
<div class="a" style="left:541px;top:604px;width:36px;height:29px;background:#f1eeea"></div>
<svg class="a" style="left:549px;top:608px" width="20" height="20" viewBox="0 0 20 20">
<defs><linearGradient id="ng" x1="0" y1="0" x2="0" y2="1"><stop offset="0" stop-color="#a8acb4"/><stop offset="0.55" stop-color="#f4f4f4"/><stop offset="1" stop-color="#c8ccd4"/></linearGradient></defs>
<rect x="0.5" y="0.5" width="18.5" height="19" fill="url(#ng)"/>
<circle cx="8.5" cy="2.6" r="1.6" fill="#222"/>
<path d="M8.5 4 L9.5 8 L6.5 13 M9.5 8 L11.5 12.5" stroke="#e0b020" stroke-width="1.6" fill="none"/>
<path d="M1.5 14.5 V18.5 M1.5 14.5 L4.5 18.5 V14.5 M5.5 16 V18.5 H7.5 V16 M8.5 14.5 L10 18.5 L11.5 14.5 M12.5 16 V18.5 M13.5 17 H15.5 Q15.5 16 14.5 16 Q13.5 16 13.5 17.5 Q13.5 18.5 15.5 18.5 M16 16 L16.8 18.5 L17.5 16.5 L18.2 18.5 L19 16" stroke="#1a2a50" stroke-width="0.9" fill="none"/>
</svg>
<div class="a" style="left:541px;top:631px;width:36px;height:2px;background:#3a6ab0"></div>
<!-- wps -->
<svg class="a" style="left:586px;top:609px" width="18" height="18" viewBox="0 0 18 18">
<rect x="0.5" y="0.5" width="17" height="17" rx="3" fill="#2a86e8"/>
<path d="M3.5 6 L6.5 12.5 L9 8 L11.5 12.5 L14.5 6 L6 6" stroke="#fff" stroke-width="1.5" fill="none" stroke-linejoin="round"/>
</svg>
<div class="a" style="left:580px;top:631px;width:30px;height:2px;background:#3a6ab0"></div>

<!-- tray -->
<svg class="a" style="left:856px;top:610px" width="9" height="16" viewBox="0 0 9 16">
<path d="M7.5 0.5 L1 8.5 H4 L1.5 15.5 L8 6.5 H5 Z" fill="#fafafa" stroke="#8a8a8a" stroke-width="0.7"/>
</svg>
<div class="a" style="left:865px;top:611px;width:26px;height:14px;border:1px solid #b8b8b8;background:#fff;border-radius:1px"></div>
<div class="a" style="left:891px;top:615px;width:2px;height:6px;background:#c8c8c8"></div>
<div class="a" style="left:867px;top:613px;width:22px;height:10px;background:#1f8f46"></div>
<div class="a" style="left:867px;top:613px;width:22px;height:10px;font-size:8.5px;line-height:10px;color:#fff;text-align:center">98%</div>
<svg class="a" style="left:895px;top:613px" width="12" height="9" viewBox="0 0 12 9"><path d="M1 7.5 L6 2 L11 7.5" stroke="#222" stroke-width="1.2" fill="none"/></svg>
<svg class="a" style="left:912px;top:612px" width="14" height="11" viewBox="0 0 14 11">
<defs><linearGradient id="cg" x1="0" y1="0" x2="0" y2="1"><stop offset="0" stop-color="#888"/><stop offset="1" stop-color="#f0f0f0"/></linearGradient></defs>
<path d="M2.5 9.5 Q0.5 9.5 0.8 7.5 Q1.2 5.5 3.5 5.8 Q4.5 2 8 2.5 Q11 3 11 6 Q13.2 6.2 13 8 Q12.8 9.5 11 9.5 Z" fill="url(#cg)" stroke="#333" stroke-width="0.9"/>
</svg>
<svg class="a" style="left:929px;top:611px" width="16" height="14" viewBox="0 0 16 14">
<path d="M1 2.5 L13 0.8 V11.5 H1 Z" fill="#f4f0ec" stroke="#333" stroke-width="1"/>
<path d="M4 9 Q5 4 9 4 M7.5 3 L9.5 4 L8 5.5" stroke="#333" stroke-width="1" fill="none"/>
<circle cx="11" cy="10.5" r="2.3" fill="#f0a020"/>
</svg>
<svg class="a" style="left:947px;top:613px" width="14" height="10" viewBox="0 0 14 10">
<rect x="2" y="2.5" width="10.5" height="6" fill="#111"/><rect x="12.5" y="4" width="1.2" height="3" fill="#111"/>
<path d="M1.5 1.5 L3 3" stroke="#111" stroke-width="1.2"/><circle cx="1.6" cy="2" r="1.2" fill="#111"/>
</svg>
<svg class="a" style="left:964px;top:613px" width="13" height="10" viewBox="0 0 13 10">
<path d="M0.8 3 H2.8 L5.5 0.8 V9.2 L2.8 7 H0.8 Z" fill="none" stroke="#222" stroke-width="0.9"/>
<path d="M7.5 3 L11.5 7.5 M11.5 3 L7.5 7.5" stroke="#222" stroke-width="0.9"/>
</svg>
<svg class="a" style="left:983px;top:612px" width="12" height="13" viewBox="0 0 12 13">
<ellipse cx="6" cy="4.5" rx="3.6" ry="4" fill="#111"/>
<ellipse cx="6" cy="8.5" rx="4.3" ry="3.5" fill="#111"/>
<ellipse cx="6" cy="9" rx="2.8" ry="2.8" fill="#f4f4f4"/>
<circle cx="4.8" cy="3.8" r="0.7" fill="#fff"/><circle cx="7.2" cy="3.8" r="0.7" fill="#fff"/>
<path d="M0.5 10 L2 8.5 M11.5 10 L10 8.5" stroke="#111" stroke-width="1.2"/>
</svg>
<svg class="a" style="left:1001px;top:613px" width="12" height="11" viewBox="0 0 12 11">
<path d="M1 10 Q1.5 3 10.5 1 M3.5 10 Q4 5 10.5 3.5 M6 10 Q6.5 7 10.5 6" stroke="#333" stroke-width="0.9" fill="none"/>
<circle cx="9.5" cy="9.5" r="1" fill="#222"/>
</svg>
<svg class="a" style="left:1017px;top:612px" width="12" height="12" viewBox="0 0 12 12">
<path d="M1 3.5 H11 V8 H1 Z M6 0.5 V11.5" stroke="#111" stroke-width="1.4" fill="none"/>
</svg>
<div class="a" style="left:1037px;top:607px;width:45px;font-size:8.8px;line-height:10px;color:#1a1a1a;text-align:center">14:07</div>
<div class="a" style="left:1036px;top:620px;width:46px;font-size:9.6px;line-height:10px;color:#1a1a1a;text-align:center">2021/1/13</div>
<svg class="a" style="left:1094px;top:611px" width="20" height="19" viewBox="0 0 20 19">
<path d="M1 1.5 H13 V11 H6 L3 13.5 V11 H1 Z" fill="#111"/>
<path d="M3.5 4 H10.5 M3.5 6.2 H10.5 M3.5 8.4 H8.5" stroke="#e8e8e8" stroke-width="0.8"/>
<circle cx="13" cy="13" r="5.3" fill="#d8d8d8" stroke="#888" stroke-width="0.9"/>
<path d="M12 10.8 L13.5 10 V16" stroke="#111" stroke-width="1.3" fill="none"/>
</svg>
<div class="a" style="left:1121px;top:604px;width:1px;height:29px;background:#c8c0b8"></div>

</body></html>
